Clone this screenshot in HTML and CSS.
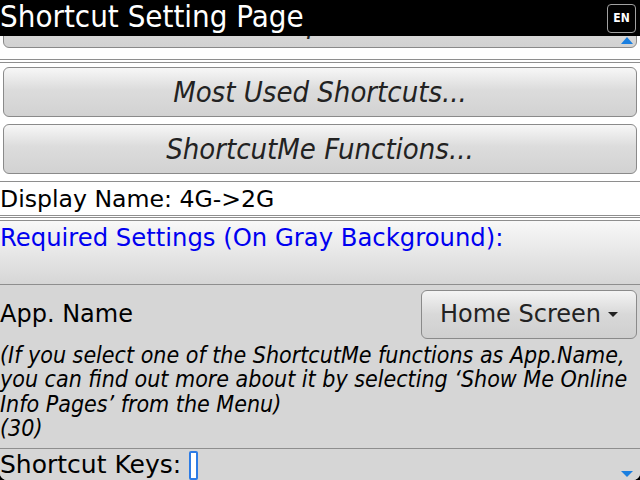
FILE: index.html
```html
<!DOCTYPE html>
<html lang="en">
<head>
  <meta charset="UTF-8">
  <title>Shortcut Setting Page</title>
  <link rel="stylesheet" href="styles.css">
</head>
<body>
  <div id="screen">
    <div class="titlebar">
      <span class="title">Shortcut Setting Page</span>
      <span class="lang">EN</span>
    </div>

    <!-- scrolled list, top button is half hidden under the title -->
    <div class="top-area">
      <div class="clip">
        <div class="btn">How to Setup a Shortcut...</div>
      </div>
      <div class="sep"></div>
      <div class="btn">Most Used Shortcuts...</div>
      <div class="btn">ShortcutMe Functions...</div>
    </div>

    <div class="field">Display Name: 4G-&gt;2G</div>
    <div class="sep sep-after"></div>

    <div class="required">Required Settings (On Gray Background):</div>

    <div class="gray">
      <div class="app-row">
        <span class="label">App. Name</span>
        <span class="choice">Home Screen <span class="caret"></span></span>
      </div>
      <p class="note">(If you select one of the ShortcutMe functions as App.Name, you can find out more about it by selecting ‘Show Me Online Info Pages’ from the Menu)<br>(30)</p>
      <div class="keys">Shortcut Keys: <span class="cursor"></span></div>
    </div>

    <span class="arrow up"></span>
    <span class="arrow down"></span>
  </div>
</body>
</html>
```

FILE: styles.css
```css
body {
  margin: 0;
  background: #000;
}

#screen {
  position: relative;
  width: 640px;
  height: 480px;
  overflow: hidden;
  background: #fff;
  border-radius: 0 0 7px 7px;
  font-family: "DejaVu Sans", sans-serif;
  color: #000;
}

.titlebar {
  display: flex;
  align-items: center;
  justify-content: space-between;
  height: 36px;
  background: #000;
  position: relative;
  z-index: 2;
}

.title {
  color: #fff;
  font-size: 31px;
  font-stretch: condensed;
  line-height: 36px;
  margin-top: -4px;
}

.lang {
  width: 27px;
  height: 27px;
  margin-right: 4px;
  border: 1px solid #a0a0a0;
  border-radius: 4px;
  color: #fff;
  font-weight: bold;
  font-size: 12px;
  font-stretch: condensed;
  display: flex;
  align-items: center;
  justify-content: center;
}

.top-area {
  padding: 0 3px;
}

.clip {
  height: 19px;
  overflow: hidden;
  display: flex;
  flex-direction: column;
  justify-content: flex-end;
}

.sep {
  height: 2px;
  border-top: 1px solid #8e8e8e;
  border-bottom: 1px solid #8e8e8e;
  margin: 4px -3px 4px;
}

.btn {
  flex: none;
  height: 48px;
  border: 1px solid #8a8a8a;
  border-radius: 6px;
  background: linear-gradient(#f7f7f7, #dcdcdc 45%, #d2d2d2);
  font-style: italic;
  font-size: 29px;
  font-stretch: condensed;
  color: #222;
  display: flex;
  align-items: center;
  justify-content: center;
  margin-bottom: 7px;
}

.field {
  border-top: 1px solid #8e8e8e;
  font-size: 23.6px;
  line-height: 32px;
  padding-top: 1px;
  border-bottom: 1px solid #8e8e8e;
}

.sep-after {
  margin: 1px 0 0;
}

.required {
  color: #0000f0;
  font-size: 24.3px;
  line-height: 34px;
  height: 63px;
  background: linear-gradient(#f8f8f8, #d6d6d6);
  border-bottom: 1px solid #8e8e8e;
}

.gray {
  background: #d6d6d6;
  height: 200px;
}

.app-row {
  display: flex;
  align-items: center;
  justify-content: space-between;
  height: 58px;
  padding-right: 3px;
}

.label {
  font-size: 24px;
}

.choice {
  width: 214px;
  height: 47px;
  border: 1px solid #8a8a8a;
  border-radius: 6px;
  background: linear-gradient(#f4f4f4, #d8d8d8 50%, #cfcfcf);
  font-size: 24px;
  color: #222;
  display: flex;
  align-items: center;
  justify-content: center;
  gap: 7px;
}

.caret {
  border-left: 5px solid transparent;
  border-right: 5px solid transparent;
  border-top: 5px solid #222;
}

.note {
  margin: 0;
  font-style: italic;
  font-size: 23px;
  font-stretch: condensed;
  line-height: 24.3px;
  height: 105px;
  border-bottom: 1px solid #8e8e8e;
}

.keys {
  font-size: 25px;
  line-height: 32px;
  display: flex;
  align-items: center;
  gap: 8px;
}

.cursor {
  display: inline-block;
  width: 5px;
  height: 25px;
  border: 2px solid #2c7be5;
  border-radius: 2px;
  background: #fff;
}

/* scroll hints over the list */
.arrow {
  position: absolute;
  right: 7px;
  border-left: 6px solid transparent;
  border-right: 6px solid transparent;
}

.up {
  top: 37px;
  border-bottom: 7px solid #1a7fe0;
}

.down {
  bottom: 3px;
  border-top: 6px solid #1a7fe0;
}
```
